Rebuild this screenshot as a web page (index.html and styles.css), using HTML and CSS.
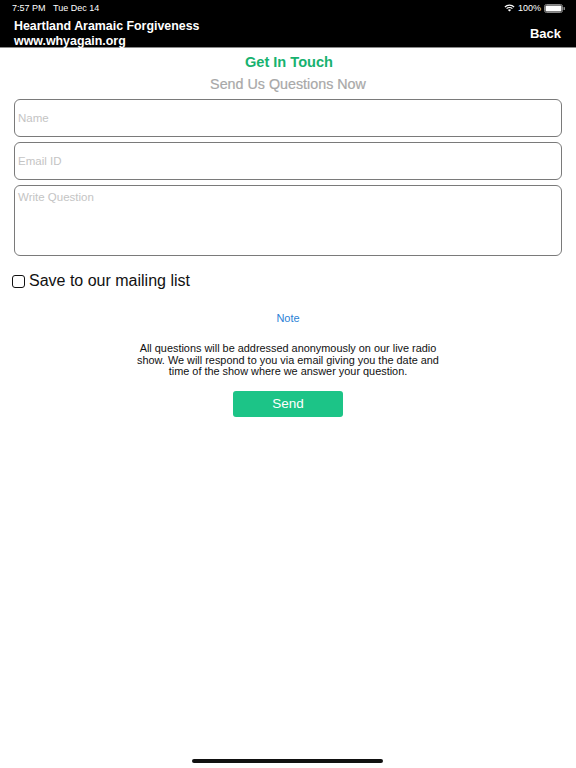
FILE: index.html
```html
<!DOCTYPE html>
<html lang="en">
<head>
  <meta charset="UTF-8" />
  <meta name="viewport" content="width=device-width, initial-scale=1.0" />
  <title>Get In Touch</title>
  <link rel="stylesheet" href="styles.css">
</head>
<body>
  <div class="topbar">
    <div class="status">
      <div class="clock">7:57 PM&nbsp;&nbsp;&nbsp;Tue Dec 14</div>
      <div class="sys">
        <svg class="wifi" width="11" height="8" viewBox="0 0 11 8">
          <path d="M5.5 7.6 L3.9 6 A2.3 2.3 0 0 1 7.1 6 Z" fill="#fff"/>
          <path d="M2.6 4.7 A4.1 4.1 0 0 1 8.4 4.7" stroke="#fff" stroke-width="1.2" fill="none"/>
          <path d="M0.9 3 A6.5 6.5 0 0 1 10.1 3" stroke="#fff" stroke-width="1.2" fill="none"/>
        </svg>
        <span>100%</span>
        <svg class="battery" width="22" height="9" viewBox="0 0 22 9">
          <rect x="0.5" y="0.5" width="18" height="8" rx="2" fill="none" stroke="#888"/>
          <rect x="1.5" y="1.5" width="16" height="6" rx="1" fill="#fff"/>
          <rect x="19.5" y="3" width="1.5" height="3" rx="0.5" fill="#888"/>
        </svg>
      </div>
    </div>
    <div class="navbar">
      <div class="app-title">
        <div>Heartland Aramaic Forgiveness</div>
        <div>www.whyagain.org</div>
      </div>
      <div class="back">Back</div>
    </div>
  </div>

  <main class="content">
    <h1>Get In Touch</h1>
    <h2>Send Us Questions Now</h2>

    <div class="fields">
      <input type="text" class="field" placeholder="Name">
      <input type="text" class="field" placeholder="Email ID">
      <textarea class="field question" placeholder="Write Question"></textarea>
    </div>

    <label class="mailing">
      <span class="box"></span>
      Save to our mailing list
    </label>

    <div class="note">Note</div>
    <p class="disclaimer">All questions will be addressed anonymously on our live radio show. We will respond to you via email giving you the date and time of the show where we answer your question.</p>

    <button class="send">Send</button>
  </main>

  <div class="home-bar"></div>
</body>
</html>
```

FILE: styles.css
```css
:root {
  --green: #1cc487;
  --green-title: #17b26f;
  --muted: #a8a8a8;
  --border: #7a7a7a;
  --blue: #2c7fd6;
}
* {
  margin: 0;
  padding: 0;
  box-sizing: border-box;
  font-family: 'Liberation Sans', Arial, sans-serif;
}
html, body {
  background: #fff;
  width: 576px;
  height: 768px;
  overflow: hidden;
  position: relative;
}

.topbar {
  background: #000;
  color: #fff;
  height: 48px;
  border-bottom: 1px solid #8a8a8a;
}
.status {
  display: flex;
  justify-content: space-between;
  align-items: center;
  height: 16px;
  padding: 0 10px 0 12px;
  font-size: 9px;
}
.sys {
  display: flex;
  align-items: center;
  gap: 3px;
}
.navbar {
  display: flex;
  justify-content: space-between;
  align-items: center;
  padding: 3px 15px 0 14px;
}
.app-title {
  font-size: 12.4px;
  font-weight: 700;
  line-height: 15px;
}
.back {
  font-size: 13px;
  font-weight: 700;
  margin-top: -1px;
}

.content {
  display: flex;
  flex-direction: column;
  align-items: center;
}
h1 {
  margin-top: 6px;
  margin-left: 2px;
  font-size: 14.6px;
  font-weight: 700;
  color: var(--green-title);
  line-height: 17px;
}
h2 {
  margin-top: 5px;
  font-size: 14.3px;
  font-weight: 400;
  color: var(--muted);
  line-height: 17px;
  -webkit-text-stroke: 0.2px var(--muted);
}

.fields {
  width: 100%;
  padding: 6px 14px 0 14px;
  display: flex;
  flex-direction: column;
  gap: 5px;
}
.field {
  width: 100%;
  height: 38px;
  border: 1.3px solid var(--border);
  border-radius: 6px;
  padding: 0 3px;
  font-size: 11.5px;
  color: #333;
  background: #fff;
  outline: none;
  resize: none;
}
.field::placeholder {
  color: #c4c4c4;
}
.question {
  height: 71px;
  padding-top: 5px;
}

.mailing {
  align-self: flex-start;
  display: flex;
  align-items: center;
  gap: 4px;
  margin: 16px 0 0 12px;
  font-size: 16px;
  color: #111;
}
.box {
  width: 13px;
  height: 13px;
  border: 1.5px solid #111;
  border-radius: 3px;
}

.note {
  margin-top: 22px;
  font-size: 11px;
  color: var(--blue);
}
.disclaimer {
  margin-top: 19px;
  width: 304px;
  text-align: center;
  font-size: 10.9px;
  line-height: 11.6px;
  color: #111;
}

.send {
  margin-top: 13px;
  width: 110px;
  height: 26px;
  border: none;
  border-radius: 3px;
  background: var(--green);
  color: #fff;
  font-size: 13.5px;
}

.home-bar {
  position: absolute;
  left: 192px;
  bottom: 5px;
  width: 191px;
  height: 4px;
  border-radius: 2px;
  background: #111;
}
```
